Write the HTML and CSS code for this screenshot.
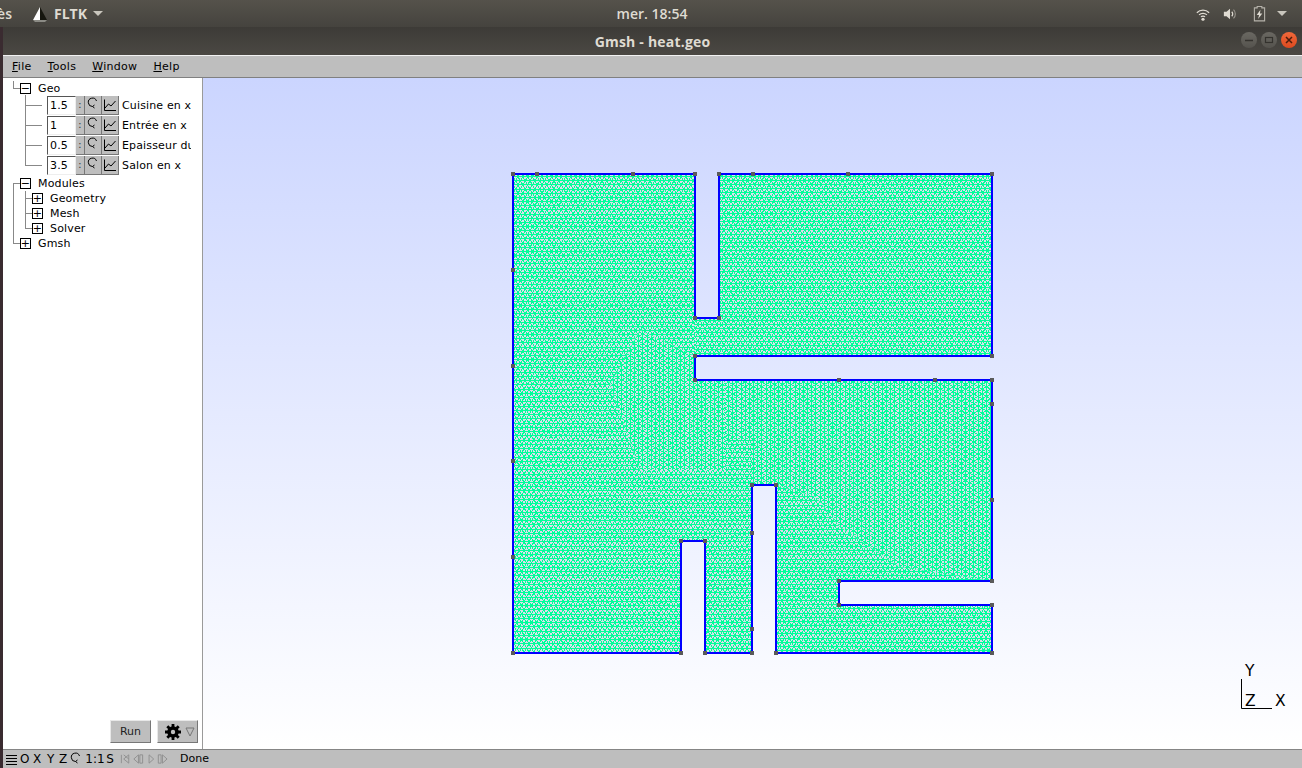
FILE: index.html
```html
<!DOCTYPE html>
<html lang="en">
<head>
    <meta charset="UTF-8">
    <title>Gmsh - heat.geo</title>
    <link rel="stylesheet" href="styles.css">
</head>
<body>
    <svg class="sprites" width="0" height="0">
        <symbol id="icon-reload" viewBox="0 0 16 18">
            <path d="M11.500 5A4.200 4.200 0 1 0 7.500 10.500" fill="none" stroke="#000"/>
            <path d="M7.500 10.500L9.500 12M7.500 10.500L9.500 9" fill="none" stroke="#000"/>
        </symbol>
        <symbol id="icon-chart" viewBox="0 0 16 18">
            <path d="M2.500 3.500V14.500H14" fill="none" stroke="#000"/>
            <path d="M3 12L6.500 8L9 10L13.500 5" fill="none" stroke="#000"/>
        </symbol>
    </svg>

    <!-- Desktop top panel -->
    <header class="top-panel">
        <div class="panel-left">
            <span class="panel-cut">ès</span>
            <svg class="fltk-icon" width="16" height="16" viewBox="0 0 16 16">
                <path d="M8 1L1 14H8Z" fill="#fff"/>
                <path d="M8 1L15 14H8Z" fill="#16160f"/>
                <path d="M1 14H15L13 16H3Z" fill="#8b8b85"/>
            </svg>
            <span class="panel-app">FLTK</span>
            <span class="panel-arrow"></span>
        </div>
        <div class="panel-clock">mer. 18:54</div>
        <div class="panel-tray">
            <svg class="tray-wifi" width="14" height="14" viewBox="0 0 16 16">
                <path d="M1 6.500A10 10 0 0 1 15 6.500M3.500 9A6.500 6.500 0 0 1 12.500 9M5.700 11.300A3.200 3.200 0 0 1 10.300 11.300" fill="none" stroke="#dfdbd2" stroke-width="1.500"/>
                <circle cx="8" cy="14" r="1.800" fill="#dfdbd2"/>
            </svg>
            <svg class="tray-volume" width="14" height="14" viewBox="0 0 16 16">
                <path d="M1 5.500H4L8 2V14L4 10.500H1Z" fill="#dfdbd2"/>
                <path d="M10 5.500A3.500 3.500 0 0 1 10 10.500" fill="none" stroke="#dfdbd2" stroke-width="1.500"/>
                <path d="M12 3A7 7 0 0 1 12 13" fill="none" stroke="#96938b" stroke-width="1.300"/>
            </svg>
            <svg class="tray-battery" width="13" height="17" viewBox="0 0 14 18">
                <path d="M4.500 1.500H9.500V3H12.500V17H1.500V3H4.500Z" fill="none" stroke="#b5b2aa" stroke-width="1.200"/>
                <path d="M8 5L4 10.500H6.500L5.500 15L10 9H7.500Z" fill="#dfdbd2"/>
            </svg>
            <span class="panel-arrow"></span>
        </div>
    </header>

    <div class="desktop">
        <div class="desktop-edge"></div>

        <div class="window">
            <div class="title-bar">
                <span class="title-text">Gmsh - heat.geo</span>
                <div class="window-buttons">
                    <span class="win-btn"><svg width="16" height="16" viewBox="0 0 16 16"><path d="M4 8.500H12" stroke="#34322e" stroke-width="1.500"/></svg></span>
                    <span class="win-btn"><svg width="16" height="16" viewBox="0 0 16 16"><rect x="4.500" y="5.500" width="7" height="5" fill="none" stroke="#34322e" stroke-width="1.200"/></svg></span>
                    <span class="win-btn close"><svg width="16" height="16" viewBox="0 0 16 16"><path d="M5 5L11 11M11 5L5 11" stroke="#4a1c0c" stroke-width="1.500"/></svg></span>
                </div>
            </div>

            <nav class="menu-bar">
                <span class="menu-item"><u>F</u>ile</span>
                <span class="menu-item"><u>T</u>ools</span>
                <span class="menu-item"><u>W</u>indow</span>
                <span class="menu-item"><u>H</u>elp</span>
            </nav>

            <div class="work-area">
                <!-- Options tree -->
                <aside class="side-panel">
                    <div class="tree">
                        <div class="tree-row top">
                            <span class="twig up"></span><span class="toggle">&minus;</span><span class="node-label">Geo</span>
                        </div>
                        <div class="tree-row param">
                            <span class="twig-space"></span><span class="twig-long tee"></span>
                            <span class="value">1.5</span><span class="mini-btn dots">:</span>
                            <span class="mini-btn"><svg width="16" height="18"><use href="#icon-reload"/></svg></span>
                            <span class="mini-btn"><svg width="16" height="18"><use href="#icon-chart"/></svg></span>
                            <span class="param-label">Cuisine en x</span>
                        </div>
                        <div class="tree-row param">
                            <span class="twig-space"></span><span class="twig-long tee"></span>
                            <span class="value">1</span><span class="mini-btn dots">:</span>
                            <span class="mini-btn"><svg width="16" height="18"><use href="#icon-reload"/></svg></span>
                            <span class="mini-btn"><svg width="16" height="18"><use href="#icon-chart"/></svg></span>
                            <span class="param-label">Entrée en x</span>
                        </div>
                        <div class="tree-row param">
                            <span class="twig-space"></span><span class="twig-long tee"></span>
                            <span class="value">0.5</span><span class="mini-btn dots">:</span>
                            <span class="mini-btn"><svg width="16" height="18"><use href="#icon-reload"/></svg></span>
                            <span class="mini-btn"><svg width="16" height="18"><use href="#icon-chart"/></svg></span>
                            <span class="param-label">Epaisseur du mur</span>
                        </div>
                        <div class="tree-row param">
                            <span class="twig-space"></span><span class="twig-long up"></span>
                            <span class="value">3.5</span><span class="mini-btn dots">:</span>
                            <span class="mini-btn"><svg width="16" height="18"><use href="#icon-reload"/></svg></span>
                            <span class="mini-btn"><svg width="16" height="18"><use href="#icon-chart"/></svg></span>
                            <span class="param-label">Salon en x</span>
                        </div>
                        <div class="tree-row top modules">
                            <span class="twig down"></span><span class="toggle">&minus;</span><span class="node-label">Modules</span>
                        </div>
                        <div class="tree-row child">
                            <span class="twig-space line"></span><span class="twig tee"></span><span class="toggle">+</span><span class="node-label">Geometry</span>
                        </div>
                        <div class="tree-row child">
                            <span class="twig-space line"></span><span class="twig tee"></span><span class="toggle">+</span><span class="node-label">Mesh</span>
                        </div>
                        <div class="tree-row child">
                            <span class="twig-space line"></span><span class="twig up"></span><span class="toggle">+</span><span class="node-label">Solver</span>
                        </div>
                        <div class="tree-row top">
                            <span class="twig up"></span><span class="toggle">+</span><span class="node-label">Gmsh</span>
                        </div>
                    </div>

                    <div class="run-bar">
                        <button class="run-btn">Run</button>
                        <button class="run-btn gear-btn">
                            <svg width="16" height="16" viewBox="0 0 16 16">
                                <path d="M8 0V16M0 8H16M2.300 2.300L13.700 13.700M13.700 2.300L2.300 13.700" stroke="#000" stroke-width="2.800"/>
                                <circle cx="8" cy="8" r="4" fill="#bebebe" stroke="#000" stroke-width="3.600"/>
                            </svg>
                            <svg width="10" height="10" viewBox="0 0 10 10"><path d="M1 1H9L5 9Z" fill="none" stroke="#777"/></svg>
                        </button>
                    </div>
                </aside>

                <!-- Graphic window with the mesh -->
                <main class="canvas">
                    <svg id="plot" class="plot" viewBox="203 78 1099 671" width="1099" height="671">
                        <defs>
                            <path id="room" d="M513 174H695V318H719V174H992V356H695V380H992V581H839V605H992V653H776V485H752V653H705V541H681V653H513Z"/>
                            <clipPath id="room-clip"><use href="#room"/></clipPath>
                        </defs>
                        <use href="#room" class="room-fill"/>
                        <g id="mesh" clip-path="url(#room-clip)"></g>
                        <use href="#room" class="room-wall"/>
                        <g id="points" class="points"></g>
                        <path d="M1241.500 679V708.500H1272" class="axis"/>
                        <text x="1245" y="676" class="axis-label">Y</text>
                        <text x="1245" y="706" class="axis-label">Z</text>
                        <text x="1275" y="706" class="axis-label">X</text>
                    </svg>
                </main>
            </div>

            <footer class="status-bar">
                <svg width="12" height="12" viewBox="0 0 12 12"><path d="M1 2.500H12M1 5.500H12M1 8.500H12M1 11.500H12" stroke="#000"/></svg>
                <span class="stat o">O</span><span class="stat x">X</span><span class="stat y">Y</span><span class="stat z">Z</span>
                <svg class="stat-reload" width="12" height="16" viewBox="2 0 12 16"><use href="#icon-reload" width="16" height="18"/></svg>
                <span class="stat ratio">1:1</span><span class="stat s">S</span>
                <svg class="player" width="48" height="12" viewBox="0 0 52 12">
                    <path d="M1.500 1.500V10.500M9.500 1.500V10.500L4 6ZM4 1.500L9.500 6" fill="none" stroke="#8e8e8e"/>
                    <path d="M20 1.500V10.500L15 6ZM21.500 1.500H24.500V10.500H21.500Z" fill="none" stroke="#8e8e8e"/>
                    <path d="M31.500 1.500L36.500 6L31.500 10.500Z" fill="none" stroke="#8e8e8e"/>
                    <path d="M41.500 1.500H44.500V10.500H41.500ZM46 1.500L51 6L46 10.500Z" fill="none" stroke="#8e8e8e"/>
                </svg>
                <span class="stat done">Done</span>
            </footer>
        </div>
    </div>

    <script src="mesh.js"></script>
</body>
</html>
```

FILE: styles.css
```css
/* Base */
* {
    margin: 0;
    padding: 0;
    box-sizing: border-box;
}

body {
    width: 1302px;
    height: 768px;
    overflow: hidden;
    display: flex;
    flex-direction: column;
    background-color: #3a2b30;
    font-family: "DejaVu Sans", sans-serif;
    font-size: 11px;
    color: #000;
}

.sprites {
    display: block;
    height: 0;
}

/* Desktop top panel */
.top-panel {
    height: 27px;
    flex-shrink: 0;
    display: flex;
    align-items: center;
    justify-content: space-between;
    background: linear-gradient(#55524b, #45433e);
    color: #dfdbd2;
    font-family: "Open Sans", sans-serif;
    font-size: 14px;
    font-weight: 600;
}

.panel-left,
.panel-tray {
    width: 340px;
    display: flex;
    align-items: center;
}

.panel-cut {
    width: 12px;
    overflow: hidden;
    display: flex;
    justify-content: flex-end;
}

.fltk-icon {
    margin-left: 20px;
}

.panel-app {
    margin-left: 6px;
    font-weight: 700;
}

.panel-left .panel-arrow {
    margin-left: 6px;
}

.panel-arrow {
    width: 0;
    height: 0;
    border-left: 5px solid transparent;
    border-right: 5px solid transparent;
    border-top: 5px solid #c9c6bd;
}

.panel-clock {
    margin-left: 2px;
    font-weight: 600;
}

.panel-tray {
    justify-content: flex-end;
    padding-right: 15px;
}

.tray-volume {
    margin-left: 13px;
}

.tray-battery {
    margin-left: 16px;
}

.panel-tray .panel-arrow {
    margin-left: 11px;
}

/* Window frame */
.desktop {
    flex: 1;
    display: flex;
    min-height: 0;
}

.desktop-edge {
    width: 3px;
    flex-shrink: 0;
}

.window {
    flex: 1;
    min-width: 0;
    display: flex;
    flex-direction: column;
}

.title-bar {
    height: 28px;
    flex-shrink: 0;
    display: flex;
    align-items: center;
    justify-content: center;
    position: relative;
    background: linear-gradient(#3d3b37, #4b4843);
    color: #dfdbd2;
    font-family: "Open Sans", sans-serif;
    font-size: 14px;
    font-weight: 700;
    letter-spacing: 0.2px;
}

.window-buttons {
    position: absolute;
    top: 5px;
    right: 5px;
    display: flex;
    gap: 4px;
}

.win-btn {
    width: 16px;
    height: 16px;
    border-radius: 50%;
    background: linear-gradient(#6a6862, #55534e);
    display: flex;
}

.win-btn.close {
    background: linear-gradient(#f0683a, #dd4a20);
}

.menu-bar {
    height: 23px;
    flex-shrink: 0;
    display: flex;
    align-items: center;
    gap: 16px;
    padding-left: 9px;
    background-color: #bebebe;
    border-top: 1px solid #f2f2f2;
    border-bottom: 1px solid #808080;
    letter-spacing: 0.3px;
}

/* Work area */
.work-area {
    flex: 1;
    min-height: 0;
    display: flex;
}

.side-panel {
    width: 200px;
    flex-shrink: 0;
    display: flex;
    flex-direction: column;
    background-color: #fff;
    border-right: 1px solid #9a9a9a;
}

.tree {
    padding: 3px 0 0 10px;
    letter-spacing: 0.15px;
}

.tree-row {
    display: flex;
    align-items: center;
    height: 15px;
}

.tree-row.top {
    height: 14px;
}

.tree-row.modules {
    height: 16px;
}

.tree-row.param {
    height: 20px;
}

/* connector cells, lines drawn as backgrounds */
.twig,
.twig-long,
.twig-space {
    align-self: stretch;
    flex-shrink: 0;
    background-repeat: no-repeat;
}

.twig {
    width: 7px;
}

.twig-space {
    width: 12px;
}

.twig-long {
    width: 22px;
}

.twig.tee,
.twig-long.tee {
    background-image: linear-gradient(#888, #888), linear-gradient(#888, #888);
    background-size: 1px 100%, 17px 1px;
    background-position: 0 0, 0 50%;
}

.twig.up,
.twig-long.up {
    background-image: linear-gradient(#888, #888), linear-gradient(#888, #888);
    background-size: 1px 50%, 17px 1px;
    background-position: 0 0, 0 50%;
}

.twig.down {
    background-image: linear-gradient(#888, #888), linear-gradient(#888, #888);
    background-size: 1px 50%, 17px 1px;
    background-position: 0 100%, 0 50%;
}

.twig-space.line {
    background-image: linear-gradient(#888, #888);
    background-size: 1px 100%;
    background-position: 0 0;
}

.toggle {
    width: 11px;
    height: 11px;
    flex-shrink: 0;
    display: flex;
    align-items: center;
    justify-content: center;
    border: 1px solid #000;
    background-color: #fff;
    font-size: 11px;
    line-height: 1;
}

.node-label {
    margin-left: 7px;
    white-space: nowrap;
}

.value {
    width: 29px;
    height: 19px;
    flex-shrink: 0;
    padding-left: 2px;
    line-height: 17px;
    background-color: #fff;
    border-top: 1px solid #555;
    border-left: 1px solid #555;
    border-bottom: 1px solid #eee;
    border-right: 1px solid #eee;
}

.mini-btn {
    width: 17px;
    height: 19px;
    flex-shrink: 0;
    display: flex;
    align-items: center;
    justify-content: center;
    background-color: #bebebe;
    border-right: 1px solid #777;
    border-bottom: 1px solid #777;
}

.mini-btn.dots {
    width: 9px;
    color: #444;
}

.param-label {
    width: 69px;
    margin-left: 3px;
    overflow: hidden;
    white-space: nowrap;
}

/* Run buttons */
.run-bar {
    margin-top: auto;
    display: flex;
    justify-content: flex-end;
    gap: 6px;
    padding: 0 4px 6px 0;
}

.run-btn {
    width: 41px;
    height: 23px;
    display: flex;
    align-items: center;
    justify-content: center;
    font-family: "DejaVu Sans", sans-serif;
    font-size: 11px;
    color: #222;
    background-color: #bebebe;
    border: none;
    border-top: 1px solid #e8e8e8;
    border-left: 1px solid #e8e8e8;
    border-right: 1px solid #777;
    border-bottom: 1px solid #777;
}

.gear-btn {
    justify-content: flex-start;
    gap: 4px;
    padding-left: 7px;
}

/* Graphic window */
.canvas {
    flex: 1;
    min-width: 0;
    background: linear-gradient(#cbd5ff, #ffffff);
}

.plot {
    display: block;
}

.room-fill {
    fill: #dcdeec;
}

.mesh-lines {
    fill: none;
    stroke: #00ff99;
    stroke-width: 1;
    shape-rendering: crispEdges;
}

.room-wall {
    fill: none;
    stroke: #0000ff;
    stroke-width: 2;
    shape-rendering: crispEdges;
}

.points rect {
    fill: #5a5a5a;
}

.axis {
    fill: none;
    stroke: #000;
    stroke-width: 1;
}

.axis-label {
    font-family: "DejaVu Sans", sans-serif;
    font-size: 15.5px;
}

/* Status bar */
.status-bar {
    height: 19px;
    flex-shrink: 0;
    display: flex;
    align-items: center;
    padding: 0 0 1px 2px;
    background-color: #bebebe;
    border-top: 1px solid #858585;
    font-size: 12px;
}

.status-bar svg {
    flex-shrink: 0;
}

.stat {
    flex-shrink: 0;
}

.stat.o {
    margin-left: 3px;
}

.stat.x {
    margin-left: 3.6px;
}

.stat.y {
    margin-left: 5.8px;
}

.stat.z {
    margin-left: 4.7px;
}

.stat-reload {
    margin-left: 3px;
}

.stat.ratio {
    margin-left: 3px;
}

.stat.s {
    margin-left: 1.7px;
}

.player {
    margin-left: 6px;
}

.stat.done {
    margin-left: 12px;
    font-size: 11px;
}
```

FILE: mesh.js
```js
// Triangle mesh of the floor plan, drawn as aliased lines like the GL view
const SVG_NS = 'http://www.w3.org/2000/svg';
const ROW = Math.sqrt(3) / 2;

// Patches of the plan, each with its own lattice direction and spacing
const patches = [
    { pts: '513,174 695,174 695,356 640,330 610,385 513,385', vertical: false, size: 4.8 },
    { pts: '695,174 992,174 992,356 695,356', vertical: false, size: 4.75 },
    { pts: '610,385 640,330 695,356 695,380 725,380 725,470 640,470', vertical: true, size: 4.85 },
    { pts: '725,380 992,380 992,581 900,567 840,527 816,497 776,485 752,485 752,440 725,440', vertical: true, size: 4.8 },
    { pts: '513,385 610,385 640,470 725,470 725,440 752,440 752,653 513,653', vertical: false, size: 4.9 },
    { pts: '776,485 816,497 840,527 900,567 992,581 992,653 776,653', vertical: false, size: 4.8 }
];

// Walls end up with a small square at every geometry point
const points = [
    [513, 174], [537, 174], [633, 174], [695, 174], [695, 318], [719, 318], [719, 174],
    [753, 174], [848, 174], [992, 174], [992, 356], [695, 356], [695, 380], [839, 380],
    [935, 380], [992, 380], [992, 404], [992, 500], [992, 581], [839, 581], [839, 605],
    [992, 605], [992, 653], [776, 653], [776, 485], [752, 485], [752, 533], [752, 629],
    [752, 653], [705, 653], [705, 541], [681, 541], [681, 653], [513, 653], [513, 557],
    [513, 461], [513, 366], [513, 270]
];

function latticePath(size, vertical) {
    const step = size * ROW;
    const x0 = 500;
    const y0 = 160;
    const span = 510;
    const parts = [];
    const move = (a, b) => vertical
        ? `M${(x0 + b).toFixed(2)} ${(y0 + a).toFixed(2)}`
        : `M${(x0 + a).toFixed(2)} ${(y0 + b).toFixed(2)}`;
    const line = (a, b) => move(a, b).replace('M', 'L');

    // Rows
    for (let b = 0; b <= span; b += step) {
        parts.push(move(0, b) + line(span, b));
    }
    // Both diagonals
    for (let a = -span; a <= 2 * span; a += size) {
        parts.push(move(a, 0) + line(a + span * 0.57735, span));
        parts.push(move(a, 0) + line(a - span * 0.57735, span));
    }
    return parts.join('');
}

const mesh = document.getElementById('mesh');
patches.forEach((patch, i) => {
    const clip = document.createElementNS(SVG_NS, 'clipPath');
    clip.id = 'patch-' + i;
    const shape = document.createElementNS(SVG_NS, 'polygon');
    shape.setAttribute('points', patch.pts);
    clip.appendChild(shape);
    mesh.appendChild(clip);

    const path = document.createElementNS(SVG_NS, 'path');
    path.setAttribute('class', 'mesh-lines');
    path.setAttribute('clip-path', `url(#patch-${i})`);
    path.setAttribute('d', latticePath(patch.size, patch.vertical));
    mesh.appendChild(path);
});

const pointLayer = document.getElementById('points');
points.forEach(([x, y]) => {
    const rect = document.createElementNS(SVG_NS, 'rect');
    rect.setAttribute('x', x - 2);
    rect.setAttribute('y', y - 2);
    rect.setAttribute('width', 4);
    rect.setAttribute('height', 4);
    pointLayer.appendChild(rect);
});
```
